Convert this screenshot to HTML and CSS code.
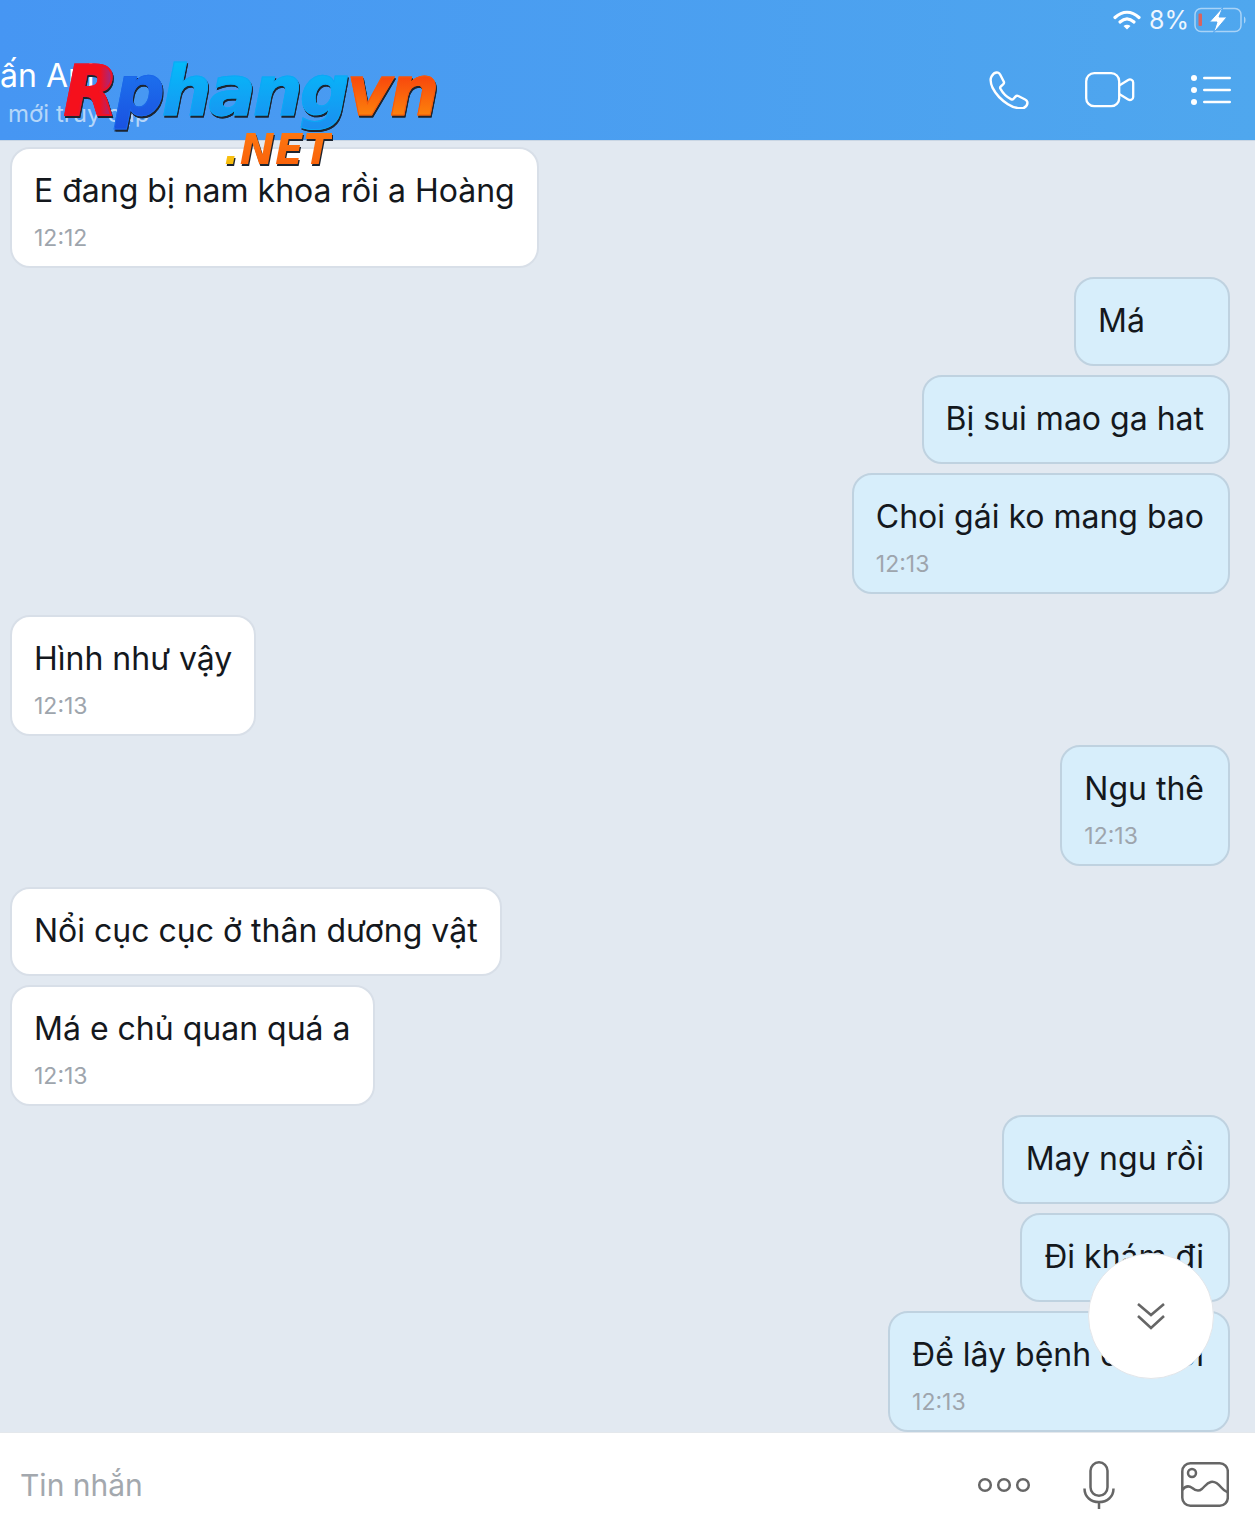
FILE: index.html
```html
<!DOCTYPE html>
<html lang="vi">
<head>
  <meta charset="UTF-8">
  <meta name="viewport" content="width=device-width, initial-scale=1.0">
  <title>Tin nhắn</title>
  <link rel="stylesheet" href="styles.css">
</head>
<body>
  <div class="screen">
    <header class="header">
      <div class="status">
        <svg class="wifi" width="28" height="22" viewBox="0 0 28 22" fill="none" stroke="#fff" stroke-width="3.2" stroke-linecap="round">
          <path d="M2 8.5C9.5 1.5 18.500 1.500 26 8.500"/>
          <path d="M7 13C11.500 9 16.500 9 21 13"/>
          <path d="M14 20.500l-3.500-3.600c2-1.600 5-1.600 7 0z" fill="#fff" stroke="none"/>
        </svg>
        <span class="percent">8%</span>
        <svg class="battery" width="54" height="26" viewBox="0 0 54 26" fill="none">
          <rect x="1" y="1.500" width="46" height="23" rx="6" stroke="#a9d3f7" stroke-width="1.500"/>
          <rect x="4.500" y="6.500" width="3.500" height="12.500" rx="1" fill="#d9635f"/>
          <path d="M50 9.500c2 .8 2 6.200 0 7z" fill="#a9d3f7"/>
          <path d="M29 0L15.500 15h7.500L19.500 26 33 10h-8z" fill="#fff" stroke="#4fa5ef" stroke-width="1"/>
        </svg>
      </div>
      <div class="header-main">
        <div class="contact">
          <div class="contact-name">ấn Anh</div>
          <div class="contact-state">mới truy cập</div>
        </div>
        <div class="actions">
          <svg width="40" height="38" viewBox="1.500 .500 37 36" fill="none" stroke="#fff" stroke-width="2.300" stroke-linejoin="round">
            <path d="M3.500 5.500C5 3 7.500 1.500 9.500 2c1 .3 1.700 1 2.200 2l3.300 6.500c.5 1 .2 2-.6 2.700l-2.200 2c-.6.500-.7 1.200-.4 1.900 2.300 4.500 5.800 8 10.400 10.300.7.300 1.400.2 1.900-.4l2-2.200c.7-.8 1.700-1.100 2.700-.6l6.500 3.300c1 .5 1.700 1.200 2 2.200.5 2-1 4.500-3.500 6C30 36 25 36 19 32 12 27.500 7.500 22.500 4.500 16.500 2.500 12 2 8 3.500 5.500z"/>
          </svg>
          <svg width="50" height="36" viewBox="0 0 50 36" fill="none" stroke="#fff" stroke-width="2.300" stroke-linejoin="round">
            <rect x="1.200" y="1.200" width="33" height="33" rx="8"/>
            <path d="M34.200 13.500l9-5.500c2-1.200 5-.2 5 2.500v14.500c0 2.700-3 3.700-5 2.500l-9-5.500"/>
          </svg>
          <svg width="40" height="32" viewBox="0 0 40 32" fill="#fff">
            <circle cx="3" cy="4" r="3"/>
            <circle cx="3" cy="16" r="3"/>
            <circle cx="3" cy="28" r="3"/>
            <rect x="12" y="2.800" width="28" height="2.400" rx="1.200"/>
            <rect x="12" y="14.800" width="28" height="2.400" rx="1.200"/>
            <rect x="12" y="26.800" width="28" height="2.400" rx="1.200"/>
          </svg>
        </div>
      </div>
    </header>

    <div class="logo">
      <div class="logo-main"><span class="logo-r">R</span><span class="logo-p">p</span><span class="logo-hang">hang</span><span class="logo-vn">vn</span></div>
      <div class="logo-net"><span class="logo-dot">.</span><span class="logo-word">NET</span></div>
    </div>

    <main class="chat">
      <div class="bubble in"><p>E đang bị nam khoa rồi a Hoàng</p><span class="time">12:12</span></div>
      <div class="bubble out"><p>Má</p></div>
      <div class="bubble out"><p>Bị sui mao ga hat</p></div>
      <div class="bubble out last"><p>Choi gái ko mang bao</p><span class="time">12:13</span></div>
      <div class="bubble in"><p>Hình như vậy</p><span class="time">12:13</span></div>
      <div class="bubble out last"><p>Ngu thê</p><span class="time">12:13</span></div>
      <div class="bubble in"><p>Nổi cục cục ở thân dương vật</p></div>
      <div class="bubble in"><p>Má e chủ quan quá a</p><span class="time">12:13</span></div>
      <div class="bubble out"><p>May ngu rồi</p></div>
      <div class="bubble out"><p>Đi khám đi</p></div>
      <div class="bubble out"><p>Để lây bệnh cho rồi</p><span class="time">12:13</span></div>
    </main>

    <button class="scroll-down">
      <svg width="30" height="28" viewBox="0 0 30 28" fill="none" stroke="#666" stroke-width="2.600">
        <path d="M2 2l13 11L28 2"/>
        <path d="M2 14l13 12L28 14"/>
      </svg>
    </button>

    <footer class="composer">
      <span class="placeholder">Tin nhắn</span>
      <div class="tools">
        <svg width="54" height="16" viewBox="0 0 54 16" fill="none" stroke="#666" stroke-width="2.500">
          <circle cx="8" cy="8" r="5.800"/>
          <circle cx="27" cy="8" r="5.800"/>
          <circle cx="46" cy="8" r="5.800"/>
        </svg>
        <svg class="mic" width="32" height="48" viewBox="0 0 32 48" fill="none" stroke="#666" stroke-width="2.500">
          <rect x="7.500" y="1.300" width="17" height="33.500" rx="8.500"/>
          <path d="M1.500 27.500c0 8.500 6.500 13.500 14.500 13.500s14.500-5 14.500-13.500"/>
          <path d="M16 41v7"/>
        </svg>
        <svg width="48" height="46" viewBox="0 0 48 46" fill="none" stroke="#666" stroke-width="2.500">
          <rect x="1.300" y="1.300" width="45.500" height="42.500" rx="8"/>
          <circle cx="11" cy="11" r="4"/>
          <path d="M1.300 28c3-4 6.500-4.500 10-2 3 2.500 6 4 9.500 1 3-2.500 5-6 9-7 4.500-1 8 2.500 10.500 5.500 2 2.500 4.500 4 6.500 5"/>
        </svg>
      </div>
    </footer>
  </div>
</body>
</html>
```

FILE: styles.css
```css
* {
  box-sizing: border-box;
}

html,
body {
  margin: 0;
  padding: 0;
}

body {
  font-family: Inter, "Noto Sans", sans-serif;
  background-color: #e2e9f1;
  color: #14181d;
}

.screen {
  position: relative;
  width: 1255px;
  height: 1536px;
  display: flex;
  flex-direction: column;
  overflow: hidden;
}

/* header */
.header {
  height: 141px;
  flex-shrink: 0;
  background: linear-gradient(90deg, #4696f3, #4fa7ee);
  border-bottom: 1px solid #c9d6e4;
  color: #fff;
  overflow: hidden;
}

.status {
  display: flex;
  justify-content: flex-end;
  align-items: center;
  height: 40px;
  padding-right: 7px;
}

.wifi {
  margin-right: 8px;
}

.percent {
  font-size: 25px;
  color: #eef6fe;
  margin-right: 5px;
}

.header-main {
  display: flex;
  justify-content: space-between;
  align-items: center;
  height: 100px;
}

.contact {
  padding-top: 8px;
}

.contact-name {
  font-size: 32px;
  line-height: 40px;
  margin-top: -4px;
}

.contact-state {
  font-size: 24px;
  line-height: 30px;
  margin: 3px 0 0 8px;
  color: #b5d6f9;
}

.actions {
  display: flex;
  align-items: center;
  gap: 56px;
  padding-right: 24px;
}

/* logo over the header */
.logo {
  position: absolute;
  left: 60px;
  top: 50px;
  width: 380px;
  font-family: "DejaVu Sans", sans-serif;
  font-weight: 700;
  font-style: italic;
  text-align: center;
}

.logo-main {
  font-size: 70px;
  line-height: 82px;
  white-space: nowrap;
  letter-spacing: -3px;
  filter: drop-shadow(1px 2px 0 #1c2430);
}

.logo-main span,
.logo-net span {
  -webkit-background-clip: text;
  background-clip: text;
  color: transparent;
}

.logo-r {
  background-image: linear-gradient(90deg, #f5101c 70%, #8a2fa0);
  -webkit-text-stroke: 2px #ee1226;
}

.logo-p {
  background-image: linear-gradient(180deg, #1d7cf2, #1a50e0);
  -webkit-text-stroke: 1px #1c68ea;
}

.logo-hang {
  background-image: linear-gradient(180deg, #00c3fb, #1c8cf0);
  -webkit-text-stroke: 1px #0ca8f6;
}

.logo-vn {
  background-image: linear-gradient(180deg, #f5200e, #ff9a0a);
  -webkit-text-stroke: 1px #f65a0c;
}

.logo-net {
  font-size: 42px;
  line-height: 40px;
  margin-top: -2px;
  padding-left: 56px;
  filter: drop-shadow(1px 2px 0 #1c2430);
}

.logo-dot {
  background-image: linear-gradient(180deg, #ffd21c, #f5b50a);
}

.logo-word {
  background-image: linear-gradient(180deg, #ff7a10, #f85e0a);
}

/* messages */
.chat {
  flex: 1;
  display: flex;
  flex-direction: column;
  gap: 9px;
  padding: 6px 25px 0 10px;
  overflow: hidden;
}

.bubble {
  min-width: 156px;
  padding: 22px 22px 23px;
  border: 2px solid #d8dfe8;
  border-radius: 20px;
  background-color: #fff;
  align-self: flex-start;
  white-space: nowrap;
}

.bubble.out {
  align-self: flex-end;
  padding-right: 24px;
  background-color: #d7eefb;
  border-color: #bfd2e0;
}

.bubble.last {
  margin-bottom: 12px;
}

.bubble p {
  margin: 0;
  font-size: 32px;
  line-height: 40px;
}

.time {
  display: block;
  margin: 13px 0 -9px;
  font-size: 23px;
  line-height: 28px;
  color: #9ea5ad;
}

/* button over the messages */
.scroll-down {
  position: absolute;
  left: 1088px;
  top: 1253px;
  width: 126px;
  height: 126px;
  display: flex;
  align-items: center;
  justify-content: center;
  padding: 0;
  border: 1px solid #e3e6ea;
  border-radius: 50%;
  background-color: #fff;
}

/* bottom bar */
.composer {
  height: 104px;
  flex-shrink: 0;
  display: flex;
  justify-content: space-between;
  align-items: center;
  padding: 0 26px 0 20px;
  background-color: #fff;
  border-top: 1px solid #e4e8ec;
}

.placeholder {
  font-size: 30px;
  color: #a3a8ae;
}

.tools {
  display: flex;
  align-items: center;
  gap: 52px;
}

.mic {
  margin-right: 14px;
}
```
